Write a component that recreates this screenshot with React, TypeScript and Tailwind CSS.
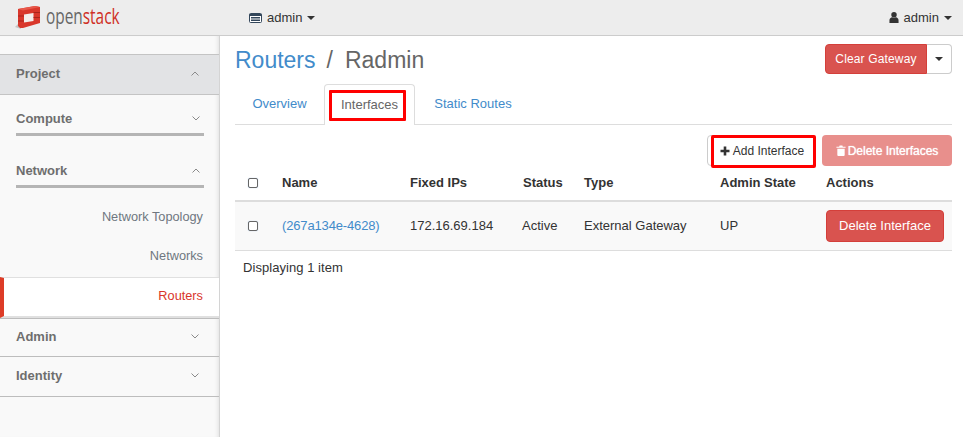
import React from "react";

const Caret = ({ className = "" }: { className?: string }) => (
  <span className={`inline-block w-0 h-0 border-x-[4px] border-x-transparent border-t-[4px] border-t-[#333] ${className}`} />
);

const Chevron = ({ up }: { up?: boolean }) => (
  <svg width="8" height="5" viewBox="0 0 8 5" fill="none" stroke="#8a8a8a" strokeWidth="1" className="block">
    <path d={up ? "M0.5 4.5 L4 1 L7.5 4.5" : "M0.5 0.5 L4 4 L7.5 0.5"} />
  </svg>
);

const Logo = () => (
  <svg width="26" height="26" viewBox="0 0 26 26" className="block mb-[4px]">
    <path d="M0 24 L4 20 L6 26 Z" fill="#c4c4c4" />
    <path d="M3 6 L20 3 L25 4 V20 L8 25 L5 25 L3 23 Z" fill="#d9372b" />
    <path d="M3 6 L20 3 L25 4 L8 7.5 Z" fill="#e8584a" />
    <path d="M9 11.5 L18.5 10 V18 L9 19.5 Z" fill="#f4eeeb" />
    <path d="M3 13 H9 M3 18 H9 M18.5 9.5 H25 M18.5 14.5 H25" stroke="#a9251c" strokeWidth="1" />
  </svg>
);

const Checkbox = () => <span className="block w-[10px] h-[10px] border border-[#666] rounded-[2px] bg-white shadow-[0_0_1px_#9bbbe0]" />;

const SectionRow = ({ label, up, className = "" }: { label: string; up?: boolean; className?: string }) => (
  <div className={`flex items-center justify-between pl-4 pr-5 font-bold text-[#6e6e6e] text-[13px] ${className}`}>
    <span>{label}</span>
    <Chevron up={up} />
  </div>
);

const SubHead = ({ label, up, className = "" }: { label: string; up?: boolean; className?: string }) => (
  <div className={`ml-4 mr-[15px] h-[41px] pt-[9px] flex items-center justify-between border-b-[3px] border-[#b5b5b5] font-bold text-[#6e6e6e] text-[13px] pr-[4px] ${className}`}>
    <span>{label}</span>
    <Chevron up={up} />
  </div>
);

export default function App() {
  return (
    <div className="w-[963px] h-[437px] overflow-hidden flex flex-col bg-white text-[13px] text-[#333] font-['Liberation_Sans',Arial,sans-serif]">
      <header className="h-[36px] shrink-0 bg-[#ededed] border-b border-[#cccccc] flex items-center pr-[11px]">
        <div className="w-[249px] pl-[15px] flex items-center gap-[5px]">
          <Logo />
          <span className="text-[22px] font-['Open_Sans',sans-serif] text-[#666] inline-block origin-left scale-x-[0.7] leading-none pb-[5px]">
            open<span className="text-[#cf2f25]">stack</span>
          </span>
        </div>
        <div className="flex items-center gap-[5px]">
          <svg width="13" height="10" viewBox="0 0 13 10" className="block">
            <rect x="0.5" y="0.5" width="12" height="9" rx="1" fill="#fff" stroke="#33475b" />
            <path d="M0.5 2 H12.5" stroke="#33475b" strokeWidth="2" />
            <path d="M2 4.5 H11 M2 6 H11 M2 7.5 H11" stroke="#33475b" />
          </svg>
          <span>admin</span>
          <Caret />
        </div>
        <div className="ml-auto flex items-center gap-[5px]">
          <svg width="10" height="11" viewBox="0 0 11 12" className="block" fill="#333">
            <circle cx="5.5" cy="3" r="3" />
            <path d="M0.5 12 V9 C0.5 7 2 6 3.5 5.7 C4.5 6.4 6.5 6.4 7.5 5.7 C9 6 10.5 7 10.5 9 V12 Z" />
          </svg>
          <span>admin</span>
          <Caret />
        </div>
      </header>

      <div className="flex flex-1 min-h-0">
        <aside className="w-[220px] shrink-0 bg-[#f9f9f9] border-r border-[#d4d4d4] shadow-[inset_-4px_0_4px_-3px_rgba(0,0,0,0.1)] pt-[18px]">
          <SectionRow label="Project" up className="h-[41px] pb-[2px] bg-[#e2e3e5] border-y border-[#c4c4c4]" />
          <SubHead label="Compute" />
          <SubHead label="Network" up className="mt-[11px]" />
          <div className="flex flex-col items-end pr-4 text-[#6f7780] text-[12.75px]">
            <div className="h-[39px] mt-[9px] flex items-center">Network Topology</div>
            <div className="h-[39px] flex items-center">Networks</div>
          </div>
          <div className="h-[41px] mt-[2px] pb-[3px] bg-white border-t border-b-2 border-[#e0e0e0] border-l-4 border-l-[#dd3c27] flex items-center justify-end pr-4 text-[#d9352b] text-[12.75px]">
            Routers
          </div>
          <SectionRow label="Admin" className="h-[39px] pb-[2px] border-b border-[#bdbdbd] border-t border-t-[#bdbdbd]" />
          <SectionRow label="Identity" className="h-[40px] pb-[2px] border-b border-[#bdbdbd]" />
        </aside>

        <main className="flex-1 min-w-0 pl-[15px] pr-[11px]">
          <div className="flex items-start justify-between h-[48px] pt-[8px]">
            <h1 className="text-[23px] leading-[32px] text-[#666]">
              <span className="text-[#428bca]">Routers</span>
              <span className="ml-[11px]">/</span>
              <span className="ml-[12px]">Radmin</span>
            </h1>
            <div className="flex h-[30px] text-[12px] tracking-[0.15px]">
              <span className="w-[102px] bg-[#d9534f] border border-[#d43f3a] rounded-l-[4px] text-white flex items-center justify-center">Clear Gateway</span>
              <span className="w-[25px] border border-l-0 border-[#ccc] rounded-r-[4px] flex items-center justify-center"><Caret /></span>
            </div>
          </div>

          <nav className="h-[41px] border-b border-[#dddddd] flex items-stretch text-[#428bca]">
            <span className="w-[89px] flex items-center justify-center">Overview</span>
            <span className="relative w-[91px] h-[41px] border border-b-0 border-[#dddddd] rounded-t-[4px] bg-white text-[#666] flex items-center justify-center">
              Interfaces
              <span className="absolute left-[4px] top-[5px] w-[77px] h-[31px] border-[3px] border-[#ff0000] rounded-[1px]" />
            </span>
            <span className="w-[116px] flex items-center justify-center">Static Routes</span>
          </nav>

          <div className="flex justify-end gap-[7px] mt-[10px] h-[31px] items-stretch text-[12px]">
            <span className="relative w-[108px] pl-[2px] border border-[#ccc] rounded-[4px] flex items-center justify-center gap-[3px] text-[#333]">
              <svg width="10" height="10" viewBox="0 0 10 10" className="block" fill="#333"><path d="M3.7 0.5 H6.3 V3.7 H9.5 V6.3 H6.3 V9.5 H3.7 V6.3 H0.5 V3.7 H3.7 Z" /></svg>
              Add Interface
              <span className="absolute left-[3px] -top-[1px] -right-[2px] -bottom-[3px] border-[3px] border-[#ff0000] rounded-[2px]" />
            </span>
            <span className="w-[130px] bg-[#e88f8c] rounded-[4px] text-white flex items-center justify-center gap-[2px] [text-shadow:0_0_1px_#ffffff]">
              <svg width="10" height="11" viewBox="0 0 10 12" className="block" fill="#fff"><path d="M3.5 0.5 H6.5 L7 2 H10 V3 H0 V2 H3 Z M1 4 H9 V11 L8.5 12 H1.5 L1 11 Z" /></svg>
              Delete Interfaces
            </span>
          </div>

          <table className="w-full border-collapse table-fixed">
            <thead>
              <tr className="h-[35px] border-b-2 border-[#dddddd] font-bold text-left">
                <th className="w-[47px] pl-[13px]"><Checkbox /></th>
                <th className="w-[128px]">Name</th>
                <th className="w-[113px]">Fixed IPs</th>
                <th className="w-[61px]">Status</th>
                <th className="w-[136px]">Type</th>
                <th className="w-[106px]">Admin State</th>
                <th>Actions</th>
              </tr>
            </thead>
            <tbody>
              <tr className="h-[49px] bg-[#f9f9f9] border-b border-[#dddddd]">
                <td className="pl-[13px]"><Checkbox /></td>
                <td className="text-[#428bca] tracking-[-0.15px]">(267a134e-4628)</td>
                <td>172.16.69.184</td>
                <td><span className="-ml-[1px] block">Active</span></td>
                <td>External Gateway</td>
                <td>UP</td>
                <td>
                  <span className="w-[118px] h-[32px] bg-[#d9534f] border border-[#d43f3a] rounded-[4px] text-white flex items-center justify-center">Delete Interface</span>
                </td>
              </tr>
            </tbody>
          </table>
          <div className="pl-[8px] mt-[7px] tracking-[0.05px]">Displaying 1 item</div>
        </main>
      </div>
    </div>
  );
}
